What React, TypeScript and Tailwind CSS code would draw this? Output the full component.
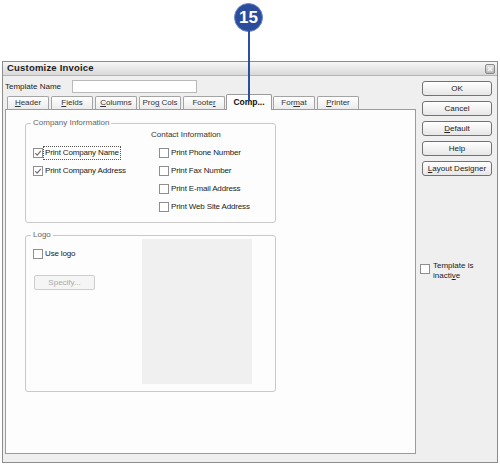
import type { ReactNode } from "react";

interface CheckProps {
    label: ReactNode;
    checked?: boolean;
    focused?: boolean;
}

function Check({ label, checked = false, focused = false }: CheckProps) {
    return (
        <div className="h-[18px] flex items-center gap-[0px]">
            <span className="w-[10px] h-[10px] border border-[#8e8e8e] bg-white flex items-center justify-center shrink-0">
                {checked && (
                    <svg width="8" height="8" viewBox="0 0 8 8">
                        <path d="M1.2 4.2 L3.2 6.2 L6.8 1.8" fill="none" stroke="#707070" strokeWidth="1.2" />
                    </svg>
                )}
            </span>
            <span
                className={
                    focused
                        ? "px-[1px] leading-[12px] tracking-[-0.15px] border border-dotted border-[#555]"
                        : "px-[1px] leading-[12px] tracking-[-0.15px] border border-transparent"
                }
            >
                {label}
            </span>
        </div>
    );
}

interface TabProps {
    children: ReactNode;
    active?: boolean;
}

function Tab({ children, active = false }: TabProps) {
    if (active) {
        return (
            <div className="w-[46px] h-[16px] -mx-[1px] -mb-px relative z-10 border border-b-0 border-[#9a9a9a] rounded-t-[2px] bg-[#fdfdfd] flex items-center justify-center font-bold text-[#111] text-[8.5px]">
                {children}
            </div>
        );
    }
    return (
        <div className="w-[42px] h-[13px] border border-b-0 border-[#a4a4a4] rounded-t-[2px] bg-gradient-to-b from-white to-[#ebebeb] flex items-center justify-center text-[#333]">
            {children}
        </div>
    );
}

function DlgButton({ children }: { children: ReactNode }) {
    return (
        <button className="w-[70px] h-[15px] border border-[#727272] rounded-[3px] bg-gradient-to-b from-white to-[#e6e6e6] text-[8px] text-[#222] leading-none flex items-center justify-center">
            {children}
        </button>
    );
}

interface GroupProps {
    title: string;
    className: string;
    children: ReactNode;
}

function Group({ title, className, children }: GroupProps) {
    return (
        <div className={`relative border border-[#c9c9c9] rounded-[3px] ${className}`}>
            <span className="absolute left-[5px] -top-[6px] px-[2px] bg-[#fdfdfd] text-[#666] leading-[10px]">
                {title}
            </span>
            {children}
        </div>
    );
}

export default function App() {
    return (
        <div
            className="relative w-[500px] h-[465px] bg-white overflow-hidden text-[8px] text-[#222] pt-[61px] pl-[2px]"
            style={{ fontFamily: '"Liberation Sans", Arial, sans-serif' }}
        >
            {/* Callout marker */}
            <div className="absolute left-[234px] top-[3px] w-[29px] h-[29px] rounded-full bg-[#2b4b9b] border-[1.5px] border-[#6d87c8] flex items-center justify-center text-white font-bold text-[17px] z-20">
                15
            </div>
            <div className="absolute left-[248px] top-[31px] w-[2px] h-[70px] bg-[#2e4f9f] z-20" />

            {/* Dialog */}
            <div className="w-[496px] h-[402px] border border-[#8c8c8c] bg-[#efefef] flex flex-col">
                {/* Title bar */}
                <div className="h-[14px] bg-gradient-to-b from-[#f7f7f7] to-[#d9d9d9] border-b border-[#b4b4b4] flex items-center justify-between pl-[4px] pr-[2px]">
                    <span className="font-bold text-[9.5px] text-[#1c1c1c] tracking-[0.2px]">Customize Invoice</span>
                    <span className="w-[10px] h-[10px] border border-[#8a8a8a] rounded-[2px] bg-gradient-to-b from-[#e4e4e4] to-[#b8b8b8] flex items-center justify-center">
                        <svg width="6" height="6" viewBox="0 0 6 6">
                            <path d="M1 1 L5 5 M5 1 L1 5" stroke="#f4f4f4" strokeWidth="1.4" />
                        </svg>
                    </span>
                </div>

                <div className="flex flex-1">
                    {/* Left side */}
                    <div className="w-[413px] flex flex-col pl-[2px]">
                        <div className="flex items-center h-[13px] mt-[4px]">
                            <span className="w-[67px]">Template Name</span>
                            <div className="w-[125px] h-[13px] border border-[#b9b9b9] bg-white" />
                        </div>

                        <div className="flex items-end gap-[2px] pl-[2px] mt-[1px] h-[15px]">
                            <Tab><span><u>H</u>eader</span></Tab>
                            <Tab><span><u>F</u>ields</span></Tab>
                            <Tab><span><u>C</u>olumns</span></Tab>
                            <Tab><span>Pro<u>g</u> Cols</span></Tab>
                            <Tab><span>Foote<u>r</u></span></Tab>
                            <Tab active>Comp...</Tab>
                            <Tab><span>For<u>m</u>at</span></Tab>
                            <Tab><span><u>P</u>rinter</span></Tab>
                        </div>

                        <div className="w-[411px] h-[345px] border border-[#9c9c9c] bg-[#fdfdfd] pl-[19px] pt-[13px]">
                            <Group title="Company Information" className="w-[251px] h-[100px] flex pt-[2px]">
                                <div className="w-[125px] pl-[7px] pt-[18px]">
                                    <Check label="Print Company Name" checked focused />
                                    <Check label="Print Company Address" checked />
                                </div>
                                <div>
                                    <div className="h-[18px] flex items-center text-[#333]">Contact Information</div>
                                    <div className="pl-[8px]">
                                        <Check label="Print Phone Number" />
                                        <Check label="Print Fax Number" />
                                        <Check label="Print E-mail Address" />
                                        <Check label="Print Web Site Address" />
                                    </div>
                                </div>
                            </Group>

                            <Group title="Logo" className="w-[251px] h-[157px] mt-[12px] flex">
                                <div className="w-[116px] pl-[7px] pt-[9px]">
                                    <Check label="Use logo" />
                                    <button className="mt-[12px] ml-[1px] w-[61px] h-[15px] border border-[#cdcdcd] rounded-[2px] bg-[#f5f5f5] text-[#ababab] text-[8px] flex items-center justify-center">
                                        Specify...
                                    </button>
                                </div>
                                <div className="w-[110px] h-[145px] mt-[3px] bg-[#f0f0f0]" />
                            </Group>
                        </div>
                    </div>

                    {/* Right side */}
                    <div className="flex-1 flex flex-col pl-[6px] pt-[5px] gap-[5px]">
                        <DlgButton>OK</DlgButton>
                        <DlgButton>Cancel</DlgButton>
                        <DlgButton><span><u>D</u>efault</span></DlgButton>
                        <DlgButton>Help</DlgButton>
                        <DlgButton><span><u>L</u>ayout Designer</span></DlgButton>
                        <div className="flex items-start gap-[3px] mt-[80px] -ml-[2px]">
                            <span className="w-[10px] h-[10px] mt-[3px] border border-[#8e8e8e] bg-white shrink-0" />
                            <span className="leading-[10px]">
                                Template is<br />inacti<u>v</u>e
                            </span>
                        </div>
                    </div>
                </div>
            </div>
        </div>
    );
}
